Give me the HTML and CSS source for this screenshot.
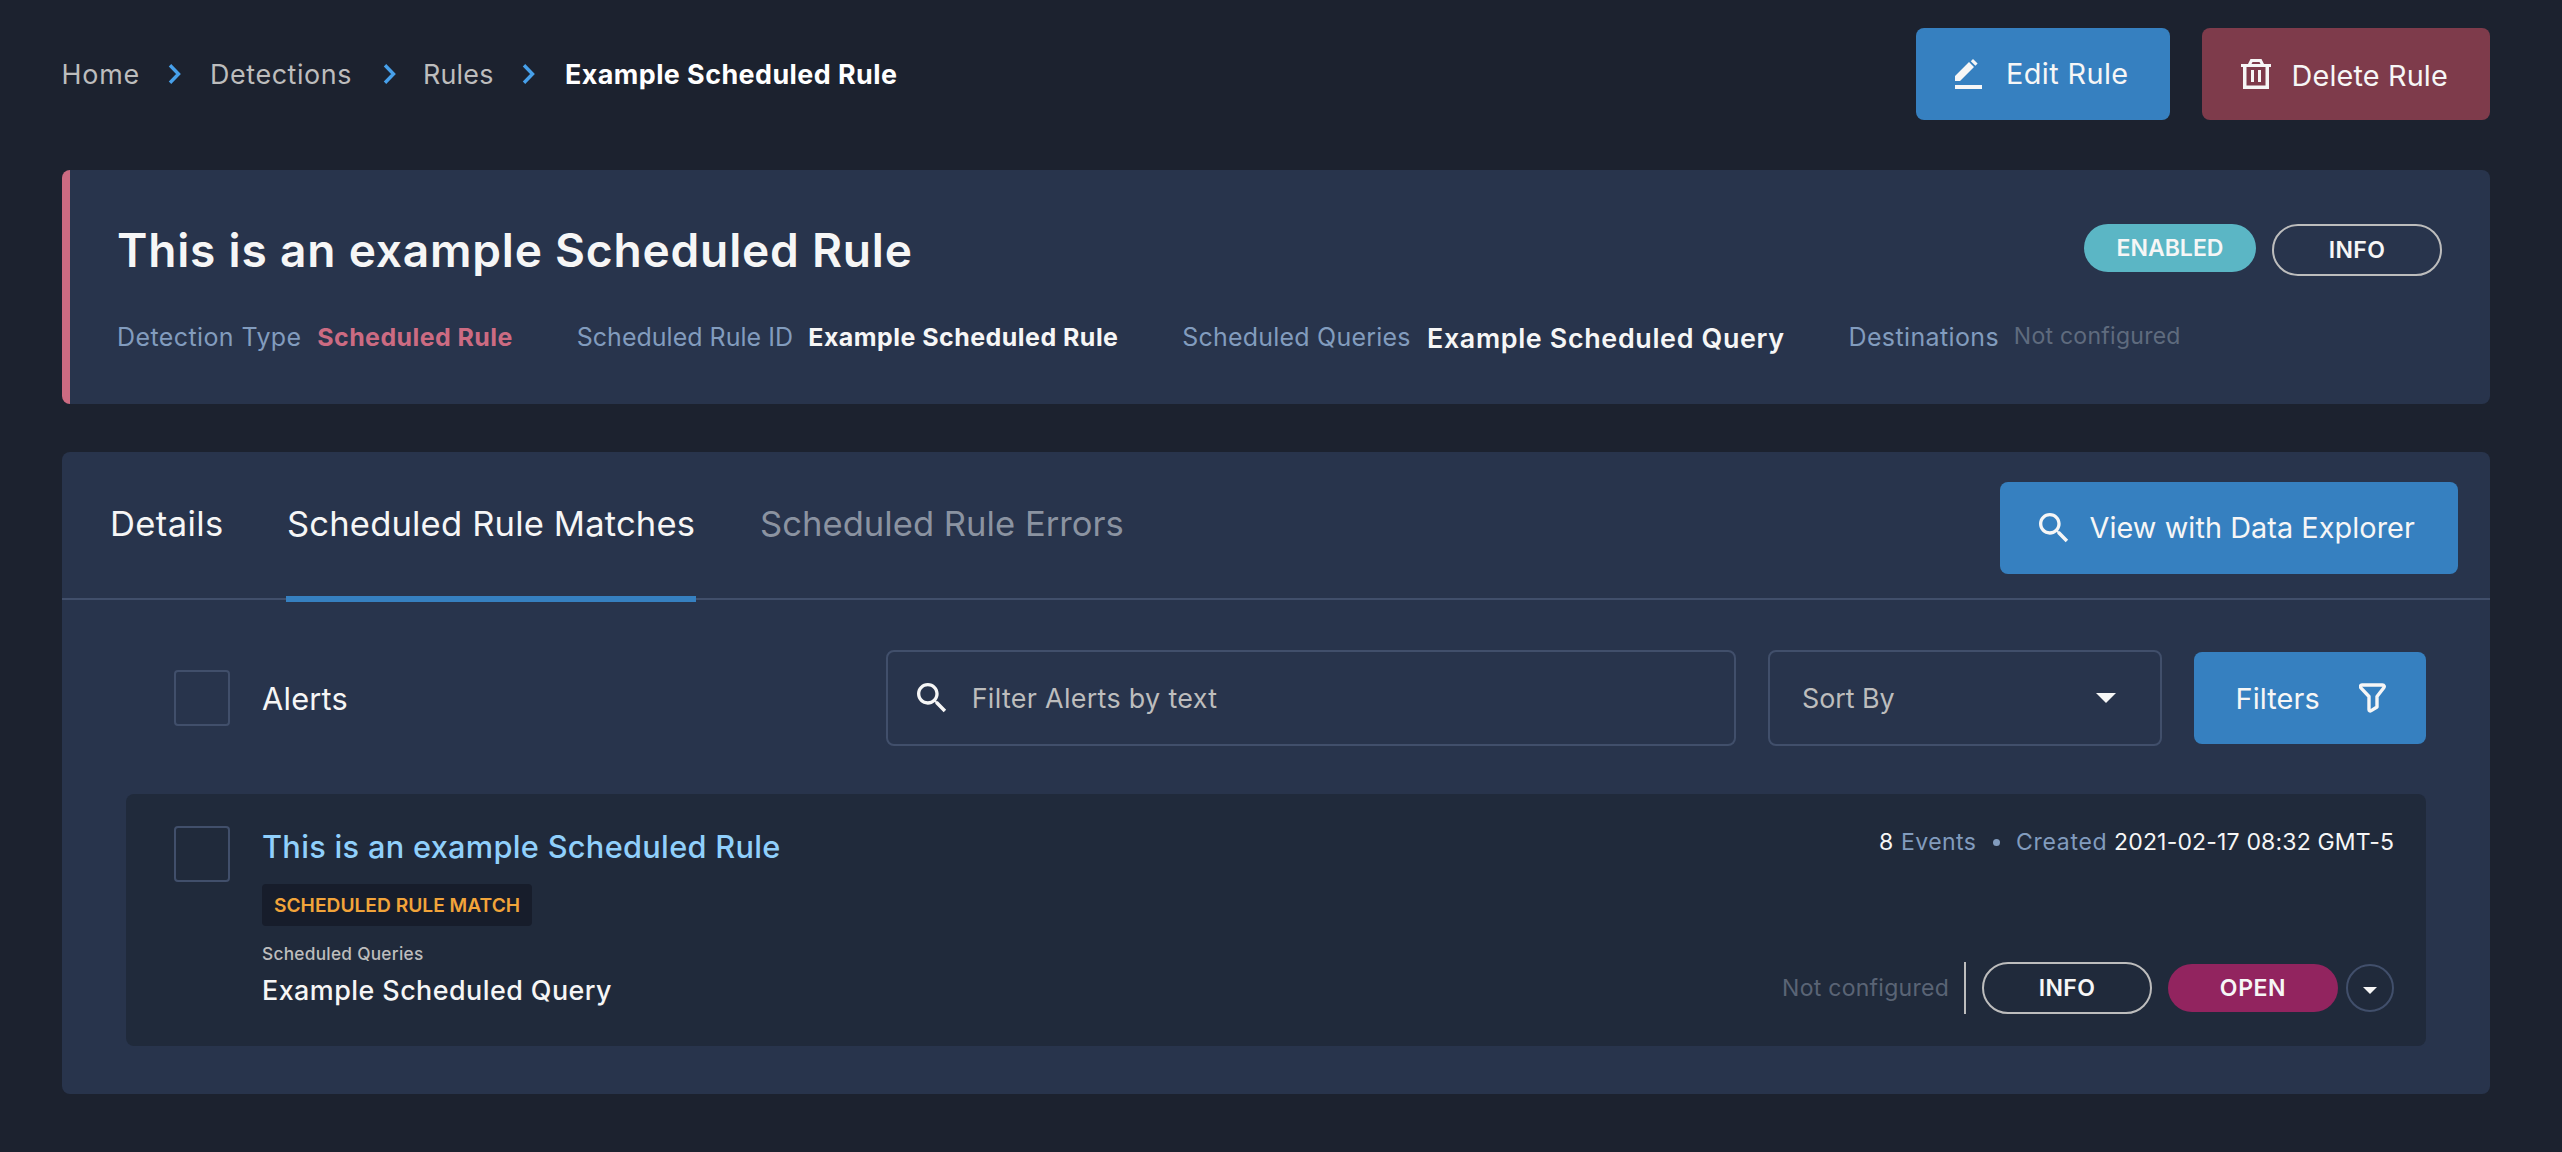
FILE: index.html
```html
<!DOCTYPE html>
<html lang="en">
<head>
<meta charset="utf-8">
<title>Example Scheduled Rule</title>
<link rel="stylesheet" href="styles.css">
</head>
<body>
<header class="topbar">
  <nav class="crumbs">
    <a class="t-home">Home</a>
    <svg class="chev" width="13" height="20" viewBox="0 0 13 20"><path d="M2 1.200 10.500 10 2 18.800"/></svg>
    <a class="t-detections">Detections</a>
    <svg class="chev" width="13" height="20" viewBox="0 0 13 20"><path d="M2 1.200 10.500 10 2 18.800"/></svg>
    <a class="t-rules">Rules</a>
    <svg class="chev" width="13" height="20" viewBox="0 0 13 20"><path d="M2 1.200 10.500 10 2 18.800"/></svg>
    <strong class="t-current">Example Scheduled Rule</strong>
  </nav>
  <div class="actions">
    <button class="btn btn-edit">
      <svg width="27" height="30" viewBox="0 0 27 30"><path d="M0 17 14 3l5 5L5 22H0zM15.800 2.200 18 0l4.600 4.600-2.200 2.200zM0 26h27v4H0z"/></svg>
      <span class="t-edit">Edit Rule</span>
    </button>
    <button class="btn btn-delete">
      <svg width="30" height="30" viewBox="0 0 30 30"><path fill-rule="evenodd" d="M0 5h7l2.500-5h11L23 5h7v3h-2v22H2V8H0zM10.500 5h9l-1-2h-7zM5.500 8v18.500h19V8zM10 11h3v12h-3zM17 11h3v12h-3z"/></svg>
      <span class="t-delete">Delete Rule</span>
    </button>
  </div>
</header>

<section class="card summary">
  <div class="summary-head">
    <h1>This is an example Scheduled Rule</h1>
    <div class="pills">
      <span class="pill pill-enabled">ENABLED</span>
      <span class="pill pill-outline">INFO</span>
    </div>
  </div>
  <div class="facts">
    <span class="label t-type">Detection Type</span>
    <b class="accent t-rule">Scheduled Rule</b>
    <span class="label t-id">Scheduled Rule ID</span>
    <b class="t-idval">Example Scheduled Rule</b>
    <span class="label t-queries">Scheduled Queries</span>
    <b class="query">Example Scheduled Query</b>
    <span class="label t-dest">Destinations</span>
    <span class="none">Not configured</span>
  </div>
</section>

<section class="card matches">
  <div class="tabs">
    <a class="tab t-details">Details</a>
    <a class="tab active">Scheduled Rule Matches</a>
    <a class="tab muted">Scheduled Rule Errors</a>
    <button class="btn btn-explore">
      <svg width="40" height="40" viewBox="0 0 24 24"><path d="M15.500 14h-.79l-.28-.27C15.410 12.590 16 11.110 16 9.500 16 5.910 13.090 3 9.500 3S3 5.910 3 9.500 5.910 16 9.500 16c1.610 0 3.090-.59 4.230-1.570l.27.28v.79l5 4.990L20.490 19l-4.990-5zm-6 0C7.010 14 5 11.990 5 9.500S7.010 5 9.500 5 14 7.010 14 9.500 11.990 14 9.500 14z"/></svg>
      <span>View with Data Explorer</span>
    </button>
  </div>

  <div class="toolbar">
    <span class="checkbox"></span>
    <span class="toolbar-title">Alerts</span>
    <div class="field search">
      <svg width="40" height="40" viewBox="0 0 24 24"><path d="M15.500 14h-.79l-.28-.27C15.410 12.590 16 11.110 16 9.500 16 5.910 13.090 3 9.500 3S3 5.910 3 9.500 5.910 16 9.500 16c1.610 0 3.090-.59 4.230-1.570l.27.28v.79l5 4.990L20.490 19l-4.990-5zm-6 0C7.010 14 5 11.990 5 9.500S7.010 5 9.500 5 14 7.010 14 9.500 11.990 14 9.500 14z"/></svg>
      <span class="t-search">Filter Alerts by text</span>
    </div>
    <div class="field sort">
      <span>Sort By</span>
      <svg width="20" height="10" viewBox="0 0 20 10"><path d="M0 0h20L10 10z"/></svg>
    </div>
    <button class="btn btn-filters">
      <span>Filters</span>
      <svg class="funnel" width="27" height="30" viewBox="0 0 27 30"><path d="M3 2h20.500c1.600 0 2.300 1.500 1.300 2.800L18 13.500V24l-5.800 3.600c-1.300.7-2.200.2-2.200-1.200V13.500L1.900 4.800C.9 3.500 1.500 2 3 2z"/></svg>
    </button>
  </div>

  <article class="alert">
    <span class="checkbox"></span>
    <div class="alert-body">
      <a class="alert-title">This is an example Scheduled Rule</a>
      <span class="badge">SCHEDULED RULE MATCH</span>
      <span class="alert-label">Scheduled Queries</span>
      <span class="alert-query">Example Scheduled Query</span>
    </div>
    <div class="alert-side">
      <div class="stats">
        <span>8</span>
        <span class="label t-events">Events</span>
        <i class="dot"></i>
        <span class="label t-created">Created</span>
        <time>2021-02-17 08:32 GMT-5</time>
      </div>
      <div class="status">
        <span class="none">Not configured</span>
        <span class="divider"></span>
        <span class="pill pill-outline">INFO</span>
        <span class="pill pill-open">OPEN</span>
        <button class="more"><svg width="14" height="7" viewBox="0 0 14 7"><path d="M0 0h14L7 7z"/></svg></button>
      </div>
    </div>
  </article>
</section>
</body>
</html>
```
FILE: styles.css
```css
* { box-sizing: border-box; }

body {
  margin: 0;
  padding: 28px 72px 58px 62px;
  background: #1c222f;
  color: #f6f6f6;
  font-family: Inter, sans-serif;
  white-space: nowrap;
}

svg { display: block; flex: none; fill: #f6f6f6; }
b, strong { font-weight: 700; }

/* Top bar */
.topbar { display: flex; justify-content: space-between; align-items: center; height: 92px; }
.crumbs {
  display: grid;
  grid-template-columns: 106.500px 42px 172.500px 40.500px 99px 43px auto;
  align-items: center;
  margin-left: -.5px;
  font-size: 26.880px;
  line-height: 36px;
  color: #bdbdbd;
}
.crumbs strong { color: #fff; }
.chev { fill: none; stroke: #47a0ea; stroke-width: 3.400; }
.t-home { letter-spacing: .8px; }
.t-detections { letter-spacing: .6px; }
.t-rules { letter-spacing: .21px; }
.t-current { letter-spacing: .44px; }
.actions { display: flex; gap: 32px; }

.btn {
  display: flex;
  align-items: center;
  height: 92px;
  padding: 0;
  border: 0;
  border-radius: 8px;
  background: #3680c0;
  color: #f6f6f6;
  font: 400 28.800px/36px Inter, sans-serif;
}
.btn-edit { width: 254px; padding-left: 39px; gap: 24px; }
.btn-delete { width: 288px; padding-left: 39px; gap: 20.500px; background: #7e3b4b; }
.t-edit { letter-spacing: .42px; }
.t-delete { letter-spacing: .16px; padding-top: 3px; }

/* Cards */
.card { border-radius: 8px; background: #28344c; }
.label { color: #829cbe; }
.none { font-size: 23.040px; letter-spacing: .25px; color: #5f6b7e; }

.summary {
  height: 234px;
  margin-top: 50px;
  padding: 50px 48px 0 47px;
  border-left: 8px solid #cc6b82;
}
.summary-head { display: flex; justify-content: space-between; height: 60px; }
h1 { margin: 0; font-size: 46.080px; line-height: 60px; font-weight: 600; letter-spacing: .8px; }
.pills { display: flex; align-items: flex-start; gap: 16px; padding-top: 4px; }
.pill {
  display: flex;
  align-items: center;
  justify-content: center;
  width: 170px;
  height: 48px;
  border-radius: 26px;
  font-size: 23.040px;
  font-weight: 600;
}
.pill-enabled { width: 172px; background: #5bb6c5; }
.pill-outline { height: 52px; border: 2px solid #bdbdbd; letter-spacing: .4px; }
.pill-open { background: #92245f; letter-spacing: .57px; }

.facts {
  display: grid;
  grid-template-columns: 200.300px 259.500px 231.500px 374px 244.700px 421.500px 165.300px auto;
  align-items: center;
  height: 36px;
  margin: 39px 0 0;
  font-size: 24.960px;
  line-height: 32px;
}
.accent { color: #cc6b82; }
.t-type { letter-spacing: .42px; }
.t-rule { letter-spacing: .42px; }
.t-id { letter-spacing: .03px; }
.t-idval { letter-spacing: .48px; }
.t-queries { letter-spacing: .23px; }
.query { font-size: 26.880px; font-weight: 600; letter-spacing: .65px; padding-top: 2px; }
.t-dest { letter-spacing: .4px; }
.facts .none { padding-bottom: 2px; }

/* Tabs */
.matches { margin-top: 48px; padding-bottom: 48px; }
.tabs {
  display: grid;
  grid-template-columns: 112px 410px 1fr auto;
  column-gap: 64px;
  height: 148px;
  padding: 0 32px 0 48px;
  border-bottom: 2px solid #414f6b;
  font-size: 34.560px;
}
.tab { position: relative; display: flex; align-items: center; padding-bottom: 3px; }
.t-details { letter-spacing: .4px; }
.active { padding-left: 1px; letter-spacing: .17px; }
.active::after {
  content: "";
  position: absolute;
  left: 0;
  right: 0;
  bottom: -4px;
  height: 6px;
  background: #3680c0;
}
.muted { color: #8b93a1; letter-spacing: .04px; }
.btn-explore { width: 458px; margin-top: 30px; padding-left: 33.500px; gap: 16px; letter-spacing: .08px; }

/* Toolbar */
.toolbar { display: flex; align-items: center; gap: 32px; margin: 50px 64px 0 112px; }
.toolbar-title { font-size: 30.720px; letter-spacing: .25px; }
.checkbox { flex: none; width: 56px; height: 56px; border: 2px solid #414f6b; border-radius: 4px; }
.field {
  display: flex;
  align-items: center;
  height: 96px;
  border: 2px solid #414f6b;
  border-radius: 8px;
  font-size: 26.880px;
  color: #bdbdbd;
}
.search { width: 850px; margin-left: auto; padding-left: 24px; gap: 19.700px; }
.t-search { letter-spacing: .32px; }
.sort { width: 394px; justify-content: space-between; padding: 0 44px 0 32px; letter-spacing: -.05px; }
.btn-filters { width: 232px; justify-content: space-between; padding: 0 40.500px 0 41.500px; letter-spacing: .14px; }
.btn-filters span { padding-top: 2px; }
.funnel { fill: none; stroke: #f6f6f6; stroke-width: 3.400; stroke-linejoin: round; }

/* Alert */
.alert {
  display: flex;
  height: 252px;
  margin: 48px 64px 0;
  padding: 32px 32px 32px 48px;
  border-radius: 8px;
  background: #202a3b;
}
.alert-body { display: flex; flex-direction: column; align-items: flex-start; margin-left: 32px; }
.alert-title { padding-top: 1px; font-size: 30.720px; line-height: 40px; font-weight: 500; letter-spacing: .31px; color: #90d0fc; }
.badge {
  margin-top: 17px;
  padding: 0 12px;
  border-radius: 4px;
  background: #171d2b;
  color: #f2a43a;
  font-size: 19.200px;
  line-height: 42px;
  font-weight: 600;
}
.alert-label { margin-top: 16px; font-size: 17.280px; line-height: 24px; font-weight: 500; letter-spacing: .27px; color: #bdbdbd; }
.alert-query { margin-top: 8px; font-size: 26.880px; line-height: 32px; font-weight: 500; letter-spacing: .46px; }

.alert-side { display: flex; flex-direction: column; justify-content: space-between; align-items: flex-end; margin-left: auto; }
.stats {
  display: grid;
  grid-template-columns: 22px 92px 23px 98px 280px;
  align-items: center;
  font-size: 23.040px;
  line-height: 32px;
  letter-spacing: .16px;
}
.stats .t-events { letter-spacing: .42px; }
.stats .t-created { letter-spacing: .69px; }
.dot { width: 7px; height: 7px; border-radius: 50%; background: #829cbe; }
.status { display: flex; align-items: center; }
.status .none { color: #5a6475; }
.divider { width: 2px; height: 52px; margin: 0 16px 0 15px; background: #bdbdbd; }
.pill-open { margin-left: 16px; }
.more {
  display: flex;
  align-items: center;
  justify-content: center;
  width: 48px;
  height: 48px;
  margin-left: 8px;
  padding: 5px 0 0;
  border: 2px solid #414f6b;
  border-radius: 50%;
  background: none;
}
```
